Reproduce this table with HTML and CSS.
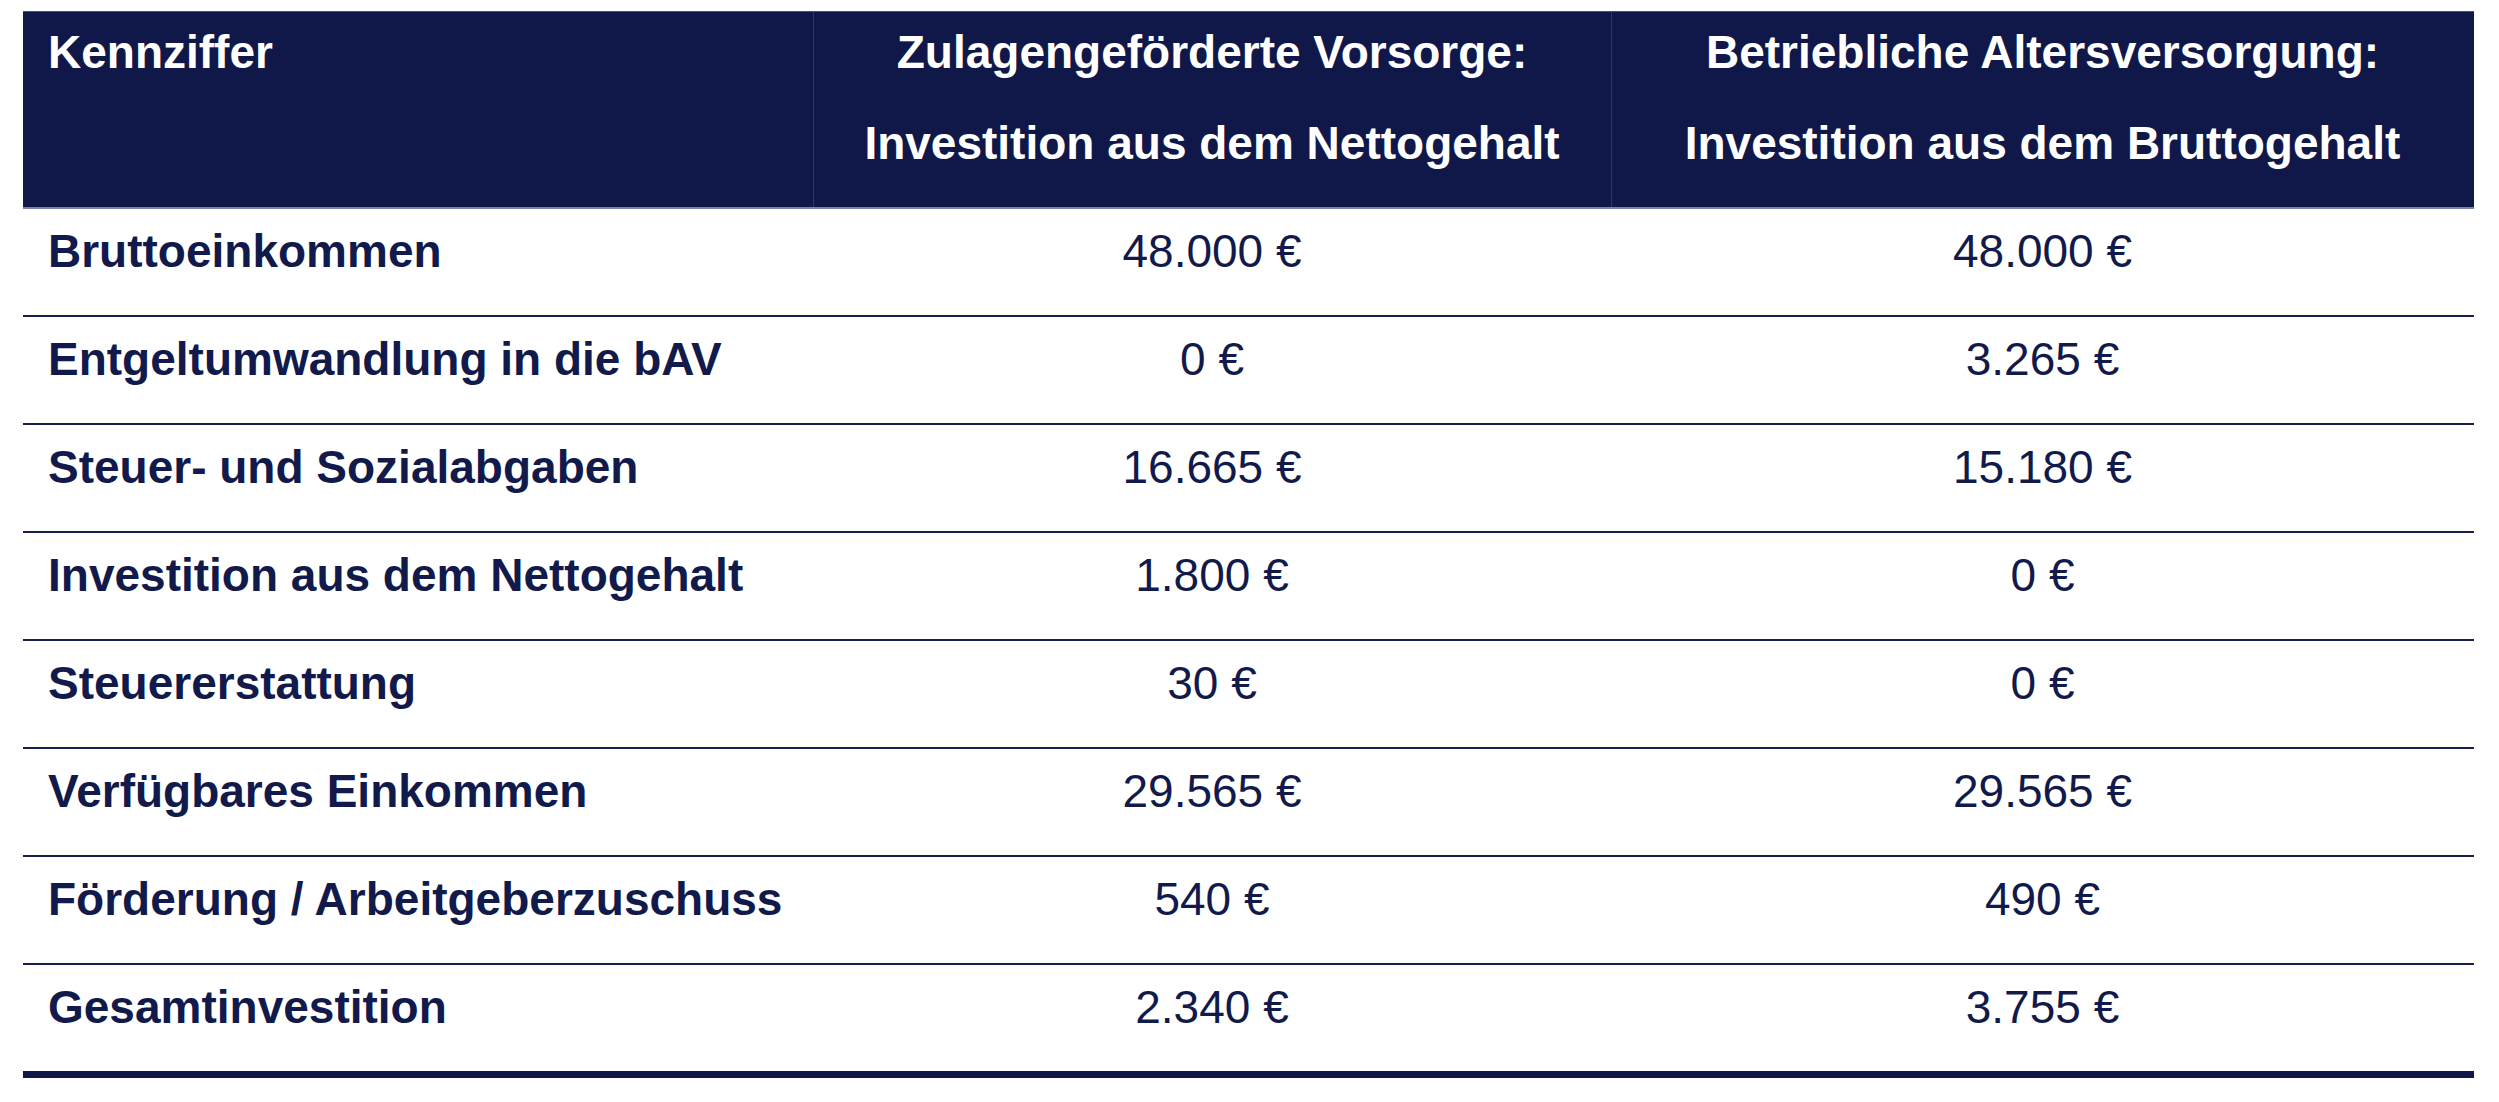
FILE: index.html
```html
<!DOCTYPE html>
<html lang="de">
<head>
<meta charset="utf-8">
<title>Vergleich Vorsorge</title>
<link rel="stylesheet" href="styles.css">
</head>
<body>
<div class="page">
  <table class="compare">
    <colgroup>
      <col class="col-key">
      <col class="col-net">
      <col class="col-gross">
    </colgroup>
    <thead>
      <tr>
        <th class="key"><div class="line">Kennziffer</div></th>
        <th class="val divided">
          <div class="lines">
            <div class="line">Zulagengeförderte Vorsorge:</div>
            <div class="line">Investition aus dem Nettogehalt</div>
          </div>
        </th>
        <th class="val divided">
          <div class="lines">
            <div class="line">Betriebliche Altersversorgung:</div>
            <div class="line">Investition aus dem Bruttogehalt</div>
          </div>
        </th>
      </tr>
    </thead>
    <tbody>
      <tr><td class="key">Bruttoeinkommen</td><td class="val">48.000 €</td><td class="val">48.000 €</td></tr>
      <tr><td class="key">Entgeltumwandlung in die bAV</td><td class="val">0 €</td><td class="val">3.265 €</td></tr>
      <tr><td class="key">Steuer- und Sozialabgaben</td><td class="val">16.665 €</td><td class="val">15.180 €</td></tr>
      <tr><td class="key">Investition aus dem Nettogehalt</td><td class="val">1.800 €</td><td class="val">0 €</td></tr>
      <tr><td class="key">Steuererstattung</td><td class="val">30 €</td><td class="val">0 €</td></tr>
      <tr><td class="key">Verfügbares Einkommen</td><td class="val">29.565 €</td><td class="val">29.565 €</td></tr>
      <tr><td class="key">Förderung / Arbeitgeberzuschuss</td><td class="val">540 €</td><td class="val">490 €</td></tr>
      <tr class="last"><td class="key">Gesamtinvestition</td><td class="val">2.340 €</td><td class="val">3.755 €</td></tr>
    </tbody>
  </table>
</div>
</body>
</html>
```

FILE: styles.css
```css
html, body {
  margin: 0;
  padding: 0;
  background: #ffffff;
}

.page {
  padding: 11px 25px 0 23px;
}

.compare {
  width: 2451px;
  table-layout: fixed;
  border-collapse: separate;
  border-spacing: 0;
  font-family: "Liberation Sans", Arial, Helvetica, sans-serif;
  font-size: 46px;
  color: #111a4b;
}

.col-key { width: 790px; }
.col-net { width: 798px; }
.col-gross { width: 863px; }

.compare th {
  background: #10184a;
  color: #ffffff;
  font-weight: bold;
  vertical-align: top;
  padding: 14px 0 38px 0;
  border-top: 1px solid #4a5183;
  border-bottom: 2px solid #7c83aa;
}

.compare th.key {
  text-align: left;
  padding-left: 25px;
}

.compare th.val {
  text-align: center;
}

.compare th.divided {
  box-shadow: inset 1px 0 0 #2f3768;
}

.lines {
  display: flex;
  flex-direction: column;
  align-items: center;
  gap: 39px;
}

.line {
  line-height: 52px;
  white-space: nowrap;
}

.compare td {
  line-height: 52px;
  padding: 16px 0 38px 0;
  border-bottom: 2px solid #161e4e;
  vertical-align: top;
  white-space: nowrap;
}

.compare td.key {
  font-weight: bold;
  text-align: left;
  padding-left: 25px;
}

.compare td.val {
  font-weight: normal;
  text-align: center;
}

.compare tr.last td {
  border-bottom: 7px solid #10184a;
}
```
